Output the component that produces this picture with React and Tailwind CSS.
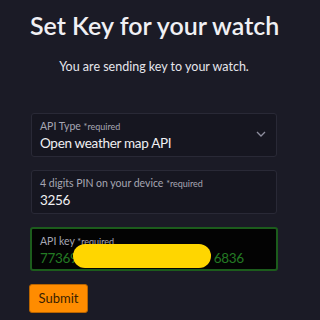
import React from 'react';

const Field = ({ label, value, className = '', valueClass = 'text-[#f0f0f3]', children }) => (
  <div className={`relative h-[44px] rounded-[3px] px-[8px] pt-[6px] ${className}`}>
    <div className="text-[10.5px] leading-[12px] text-[#a6a6b3]">
      {label} <span className="text-[9px]">*required</span>
    </div>
    <div className={`mt-[1px] text-[13.5px] leading-[18px] tracking-[-0.3px] ${valueClass}`}>{value}</div>
    {children}
  </div>
);

const App = () => {
  return (
    <div
      className="w-[320px] h-[320px] overflow-hidden bg-[#1b1b26] text-white"
      style={{ fontFamily: 'Lato, "Noto Sans", sans-serif' }}
    >
      <div className="ml-[30px] w-[248px]">
        <h1 className="pt-[10px] text-center text-[25px] leading-[30px] font-semibold whitespace-nowrap text-[#f0f0f4]">
          Set Key for your watch
        </h1>
        <p className="mt-[18px] text-center text-[12.5px] leading-[18px] text-[#e6e6ec]">
          You are sending key to your watch.
        </p>

        <div className="mt-[37px] flex flex-col gap-[13px]">
          <div className="px-px">
            <Field label="API Type" value="Open weather map API" className="border border-[#292936] bg-[#161620]">
              <svg className="absolute right-[10px] top-[16px]" width="10" height="8" viewBox="0 0 10 8">
                <path d="M1 2 L5 6 L9 2" fill="none" stroke="#8e8e9e" strokeWidth="1.3" />
              </svg>
            </Field>
          </div>
          <div className="px-px">
            <Field label="4 digits PIN on your device" value="3256" className="border border-[#292936] bg-[#161620]" />
          </div>
          <Field
            label="API key"
            value={<span>77369<span className="inline-block w-[136px]" />6836</span>}
            className="border-2 border-[#1c5c1c] bg-[#030303] pt-[5px] px-[7px]"
            valueClass="text-[#237a23]"
          >
            <div className="absolute left-[41px] top-[15px] h-[24px] w-[138px] rounded-full bg-[#ffd600]" />
          </Field>
        </div>

        <button className="-ml-px mt-[13px] h-[29px] w-[59px] rounded-[3px] border border-[#b86400] bg-[#ff8c00] text-[13px] text-[#3a1e00]">
          Submit
        </button>
      </div>
    </div>
  );
};

export default App;
